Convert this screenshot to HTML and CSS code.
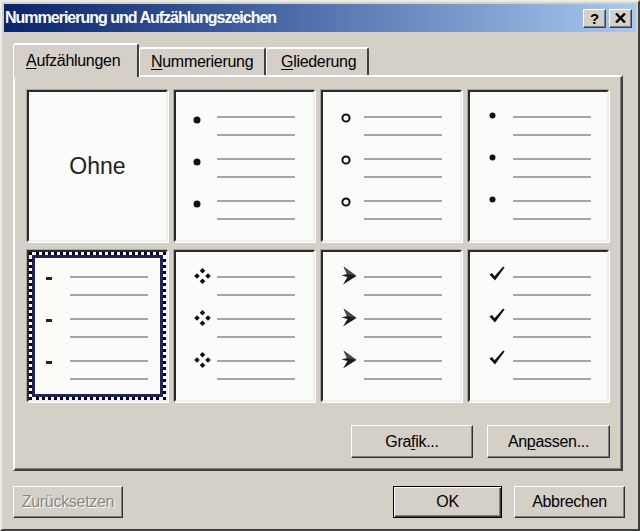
FILE: index.html
```html
<!DOCTYPE html>
<html lang="de">
<head>
<meta charset="utf-8">
<title>Nummerierung und Aufzählungszeichen</title>
<link rel="stylesheet" href="styles.css">
</head>
<body>
<div class="dialog">
  <div class="titlebar">
    <span class="title">Nummerierung und Aufzählungszeichen</span>
    <div class="tbtns">
      <span class="tbtn help">?</span>
      <span class="tbtn close"><svg width="11" height="10" viewBox="0 0 11 10"><path d="M1 0.5 L10 9.5 M10 0.5 L1 9.5" stroke="#000" stroke-width="2.4"/></svg></span>
    </div>
  </div>
  <div class="content">
    <div class="tabs">
      <div class="tab active t1"><u>A</u>ufzählungen</div>
      <div class="tab t2"><u>N</u>ummerierung</div>
      <div class="tab t3"><u>G</u>liederung</div>
    </div>
    <div class="panel">
      <div class="grid">
        <div class="cell none"><span>Ohne</span></div>

        <div class="cell">
          <div class="g"><div class="r"><span class="bw"><svg class="b dot" width="8" height="8" viewBox="0 0 8 8"><circle cx="4" cy="4" r="3.5" fill="#111"/></svg></span><span class="ln"></span></div><div class="r"><span class="bw"></span><span class="ln"></span></div></div>
          <div class="g"><div class="r"><span class="bw"><svg class="b dot" width="8" height="8" viewBox="0 0 8 8"><circle cx="4" cy="4" r="3.5" fill="#111"/></svg></span><span class="ln"></span></div><div class="r"><span class="bw"></span><span class="ln"></span></div></div>
          <div class="g"><div class="r"><span class="bw"><svg class="b dot" width="8" height="8" viewBox="0 0 8 8"><circle cx="4" cy="4" r="3.5" fill="#111"/></svg></span><span class="ln"></span></div><div class="r"><span class="bw"></span><span class="ln"></span></div></div>
        </div>

        <div class="cell">
          <div class="g"><div class="r"><span class="bw"><svg class="b ring" width="10" height="10" viewBox="0 0 10 10"><circle cx="5" cy="5" r="3.6" fill="none" stroke="#111" stroke-width="2"/></svg></span><span class="ln"></span></div><div class="r"><span class="bw"></span><span class="ln"></span></div></div>
          <div class="g"><div class="r"><span class="bw"><svg class="b ring" width="10" height="10" viewBox="0 0 10 10"><circle cx="5" cy="5" r="3.6" fill="none" stroke="#111" stroke-width="2"/></svg></span><span class="ln"></span></div><div class="r"><span class="bw"></span><span class="ln"></span></div></div>
          <div class="g"><div class="r"><span class="bw"><svg class="b ring" width="10" height="10" viewBox="0 0 10 10"><circle cx="5" cy="5" r="3.6" fill="none" stroke="#111" stroke-width="2"/></svg></span><span class="ln"></span></div><div class="r"><span class="bw"></span><span class="ln"></span></div></div>
        </div>

        <div class="cell">
          <div class="g"><div class="r"><span class="bw"><svg class="b sdot" width="7" height="7" viewBox="0 0 7 7"><circle cx="3.5" cy="3.5" r="3" fill="#111"/></svg></span><span class="ln w"></span></div><div class="r"><span class="bw"></span><span class="ln w"></span></div></div>
          <div class="g"><div class="r"><span class="bw"><svg class="b sdot" width="7" height="7" viewBox="0 0 7 7"><circle cx="3.5" cy="3.5" r="3" fill="#111"/></svg></span><span class="ln w"></span></div><div class="r"><span class="bw"></span><span class="ln w"></span></div></div>
          <div class="g"><div class="r"><span class="bw"><svg class="b sdot" width="7" height="7" viewBox="0 0 7 7"><circle cx="3.5" cy="3.5" r="3" fill="#111"/></svg></span><span class="ln w"></span></div><div class="r"><span class="bw"></span><span class="ln w"></span></div></div>
        </div>

        <div class="cell sel">
          <div class="g"><div class="r"><span class="bw"><span class="b dash"></span></span><span class="ln"></span></div><div class="r"><span class="bw"></span><span class="ln"></span></div></div>
          <div class="g"><div class="r"><span class="bw"><span class="b dash"></span></span><span class="ln"></span></div><div class="r"><span class="bw"></span><span class="ln"></span></div></div>
          <div class="g"><div class="r"><span class="bw"><span class="b dash"></span></span><span class="ln"></span></div><div class="r"><span class="bw"></span><span class="ln"></span></div></div>
        </div>

        <div class="cell">
          <div class="g"><div class="r"><span class="bw"><svg class="b quad" width="17" height="16" viewBox="0 0 17 16"><path d="M8.5 0 L11.3 2.8 L8.5 5.6 L5.7 2.8 Z M8.5 10.4 L11.3 13.2 L8.5 16 L5.7 13.2 Z M3 5.2 L5.8 8 L3 10.8 L0.2 8 Z M14 5.2 L16.8 8 L14 10.8 L11.2 8 Z" fill="#111"/></svg></span><span class="ln"></span></div><div class="r"><span class="bw"></span><span class="ln"></span></div></div>
          <div class="g"><div class="r"><span class="bw"><svg class="b quad" width="17" height="16" viewBox="0 0 17 16"><path d="M8.5 0 L11.3 2.8 L8.5 5.6 L5.7 2.8 Z M8.5 10.4 L11.3 13.2 L8.5 16 L5.7 13.2 Z M3 5.2 L5.8 8 L3 10.8 L0.2 8 Z M14 5.2 L16.8 8 L14 10.8 L11.2 8 Z" fill="#111"/></svg></span><span class="ln"></span></div><div class="r"><span class="bw"></span><span class="ln"></span></div></div>
          <div class="g"><div class="r"><span class="bw"><svg class="b quad" width="17" height="16" viewBox="0 0 17 16"><path d="M8.5 0 L11.3 2.8 L8.5 5.6 L5.7 2.8 Z M8.5 10.4 L11.3 13.2 L8.5 16 L5.7 13.2 Z M3 5.2 L5.8 8 L3 10.8 L0.2 8 Z M14 5.2 L16.8 8 L14 10.8 L11.2 8 Z" fill="#111"/></svg></span><span class="ln"></span></div><div class="r"><span class="bw"></span><span class="ln"></span></div></div>
        </div>

        <div class="cell">
          <div class="g"><div class="r"><span class="bw"><svg class="b arrow" width="16" height="19" viewBox="0 0 16 19"><path d="M2.5 0.5 L15.5 10 L2 18.5 L6.5 11 L0.5 9.5 L6 8 Z" fill="#1a1a1a"/><path d="M2.5 0.5 L15.5 10 L6 8 Z" fill="#4a4a4a"/></svg></span><span class="ln"></span></div><div class="r"><span class="bw"></span><span class="ln"></span></div></div>
          <div class="g"><div class="r"><span class="bw"><svg class="b arrow" width="16" height="19" viewBox="0 0 16 19"><path d="M2.5 0.5 L15.5 10 L2 18.5 L6.5 11 L0.5 9.5 L6 8 Z" fill="#1a1a1a"/><path d="M2.5 0.5 L15.5 10 L6 8 Z" fill="#4a4a4a"/></svg></span><span class="ln"></span></div><div class="r"><span class="bw"></span><span class="ln"></span></div></div>
          <div class="g"><div class="r"><span class="bw"><svg class="b arrow" width="16" height="19" viewBox="0 0 16 19"><path d="M2.5 0.5 L15.5 10 L2 18.5 L6.5 11 L0.5 9.5 L6 8 Z" fill="#1a1a1a"/><path d="M2.5 0.5 L15.5 10 L6 8 Z" fill="#4a4a4a"/></svg></span><span class="ln"></span></div><div class="r"><span class="bw"></span><span class="ln"></span></div></div>
        </div>

        <div class="cell">
          <div class="g"><div class="r"><span class="bw"><svg class="b check" width="16" height="15" viewBox="0 0 16 15"><path d="M0.5 8.5 L3 7 L5.5 10.3 L14.2 0.5 L15.6 1.6 L6 14.5 Z" fill="#111"/></svg></span><span class="ln w"></span></div><div class="r"><span class="bw"></span><span class="ln w"></span></div></div>
          <div class="g"><div class="r"><span class="bw"><svg class="b check" width="16" height="15" viewBox="0 0 16 15"><path d="M0.5 8.5 L3 7 L5.5 10.3 L14.2 0.5 L15.6 1.6 L6 14.5 Z" fill="#111"/></svg></span><span class="ln w"></span></div><div class="r"><span class="bw"></span><span class="ln w"></span></div></div>
          <div class="g"><div class="r"><span class="bw"><svg class="b check" width="16" height="15" viewBox="0 0 16 15"><path d="M0.5 8.5 L3 7 L5.5 10.3 L14.2 0.5 L15.6 1.6 L6 14.5 Z" fill="#111"/></svg></span><span class="ln w"></span></div><div class="r"><span class="bw"></span><span class="ln w"></span></div></div>
        </div>
      </div>
      <div class="pbtns">
        <button class="btn grafik">Gra<u>f</u>ik...</button>
        <button class="btn anpassen">An<u>p</u>assen...</button>
      </div>
    </div>
    <div class="footer">
      <button class="btn dis reset">Zurücksetzen</button>
      <span class="spacer"></span>
      <button class="btn def ok">OK</button>
      <button class="btn cancel">Abbrechen</button>
    </div>
  </div>
</div>
</body>
</html>
```

FILE: styles.css
```css
* { box-sizing: border-box; }
html, body { margin: 0; padding: 0; }
body {
  background: #d4d0c8;
  font-family: "Liberation Sans", Arial, sans-serif;
  font-size: 16px;
  letter-spacing: -0.3px;
  color: #000;
}
.dialog {
  width: 640px;
  height: 531px;
  background: #d4d0c8;
  border: 2px solid;
  border-color: #ecebe6 #404040 #404040 #ecebe6;
  padding: 2px;
}
.titlebar {
  height: 28px;
  display: flex;
  align-items: center;
  justify-content: space-between;
  background: linear-gradient(to right, #0a246a 0%, #3a5a9a 35%, #a6caf0 100%);
  padding: 0 4px 0 1px;
}
.title {
  color: #fff;
  font-weight: bold;
  font-size: 16px;
  letter-spacing: -1px;
  white-space: nowrap;
}
.tbtns { display: flex; gap: 3px; }
.tbtn {
  width: 23px;
  height: 19px;
  background: #d4d0c8;
  border: 1px solid;
  border-color: #fff #404040 #404040 #fff;
  box-shadow: inset -1px -1px #808080;
  display: flex;
  align-items: center;
  justify-content: center;
  font-weight: bold;
  font-size: 15px;
  letter-spacing: 0;
  line-height: 1;
}
.content {
  padding: 11px 9px 0 9px;
}
.tabs {
  display: flex;
  height: 32px;
  align-items: flex-start;
  position: relative;
  z-index: 2;
}
.tab {
  height: 28px;
  margin-top: 4px;
  display: flex;
  align-items: center;
  border-top: 2px solid #fff;
  border-left: 1px solid #fff;
  border-right: 2px solid #404040;
  border-radius: 3px 3px 0 0;
  background: #d4d0c8;
  white-space: nowrap;
}
.tab.active {
  height: 34px;
  margin-top: 0;
  padding-bottom: 0;
}
.t1 { width: 126px; padding-left: 12px; }
.t2 { width: 127px; padding-left: 11px; }
.t3 { width: 103px; padding-left: 14px; }
.tab u, .btn u { text-decoration-thickness: 1px; text-underline-offset: 2px; }
.panel {
  width: 610px;
  height: 396px;
  border: 2px solid;
  border-color: #fff #404040 #404040 #fff;
  box-shadow: inset -1px -1px #808080;
  padding: 13px 11px 0 12px;
  display: flex;
  flex-direction: column;
}
.grid {
  display: grid;
  grid-template-columns: repeat(4, 141px);
  grid-template-rows: repeat(2, 152px);
  column-gap: 6px;
  row-gap: 8px;
}
.cell {
  background: #fbfbfa;
  border: 2px solid;
  border-color: #2a2a2a #eeeeea #eeeeea #2a2a2a;
  box-shadow: 1px 1px 0 #fff, -1px -1px 0 #a8a6a0;
  padding-top: 16px;
}
.cell.sel {
  outline: 3px dotted #000020;
  outline-offset: -5px;
  box-shadow: 1px 1px 0 #fff, -1px -1px 0 #a8a6a0, inset 0 0 0 3px #fbfbfa, inset 0 0 0 6px #22225a;
}
.cell.none {
  padding-top: 0;
  display: flex;
  align-items: center;
  justify-content: center;
  font-size: 23px;
  letter-spacing: 0;
  color: #222;
}
.g { margin-bottom: 6px; }
.r {
  height: 18px;
  display: flex;
  align-items: center;
}
.bw {
  width: 41px;
  height: 18px;
  display: flex;
  align-items: center;
  flex: none;
}
.ln {
  width: 78px;
  height: 2px;
  background: #a4a4a4;
}
.ln.w { margin-left: 2px; }
.b { display: block; flex: none; }
.dot { margin-left: 17px; margin-top: 5px; }
.ring { margin-left: 18px; margin-top: 2px; }
.sdot { margin-left: 19px; margin-top: -4px; }
.dash { width: 6px; height: 3px; background: #222; margin-left: 17px; margin-top: 2px; }
.quad { margin-left: 18px; margin-top: -2px; }
.arrow { margin-left: 18px; margin-top: -4px; }
.check { margin-left: 19px; margin-top: -8px; }
.pbtns {
  display: flex;
  justify-content: flex-end;
  gap: 14px;
  margin-top: 23px;
}
.btn {
  height: 33px;
  background: #d4d0c8;
  border: 1px solid;
  border-color: #fff #303030 #303030 #fff;
  box-shadow: inset -1px -1px #808080;
  font-family: "Liberation Sans", Arial, sans-serif;
  font-size: 16px;
  letter-spacing: -0.3px;
  color: #000;
  padding: 0;
}
.grafik { width: 122px; }
.anpassen { width: 123px; }
.footer {
  display: flex;
  margin-top: 15px;
  padding-right: 2px;
  gap: 12px;
}
.footer .btn { height: 32px; }
.spacer { flex: 1; }
.reset { width: 110px; }
.ok { width: 109px; }
.cancel { width: 111px; }
.btn.def {
  border: 1px solid #000;
  box-shadow: inset 1px 1px #fff, inset -1px -1px #404040, inset -2px -2px #808080;
}
.btn.dis {
  color: #8a8882;
  text-shadow: 1px 1px 0 #fff;
}
```
